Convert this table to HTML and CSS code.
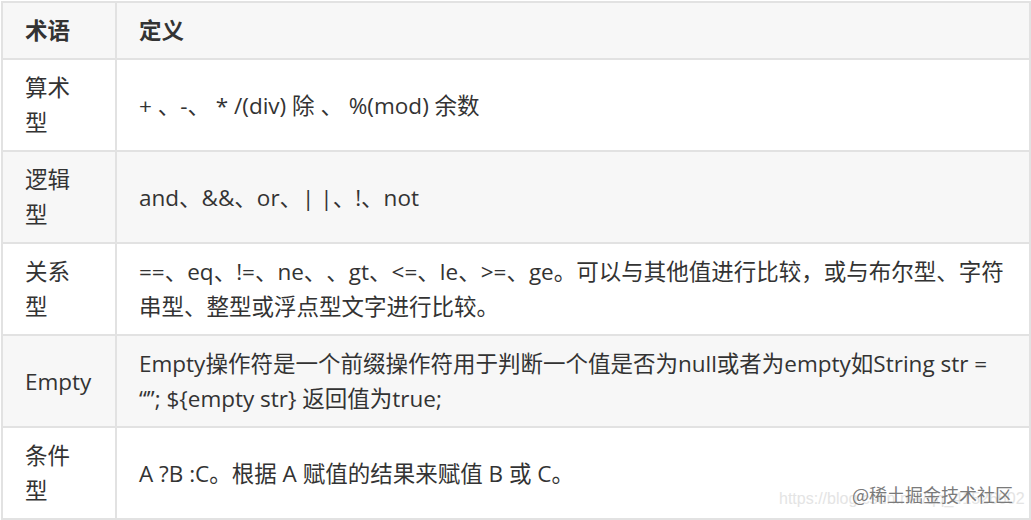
FILE: index.html
```html
<!DOCTYPE html>
<html lang="zh">
<head>
<meta charset="utf-8">
<link rel="stylesheet" href="styles.css">
</head>
<body>
<div class="page">
  <table class="terms">
    <colgroup>
      <col class="col-term">
      <col class="col-def">
    </colgroup>
    <thead>
      <tr><th>术语</th><th>定义</th></tr>
    </thead>
    <tbody>
      <tr><td>算术<br>型</td><td>+ 、-、 * /(div) 除 、 %(mod) 余数</td></tr>
      <tr class="alt"><td>逻辑<br>型</td><td>and、&amp;&amp;、or、| |、!、not</td></tr>
      <tr><td>关系<br>型</td><td>==、eq、!=、ne、、gt、&lt;=、le、&gt;=、ge。可以与其他值进行比较，或与布尔型、字符串型、整型或浮点型文字进行比较。</td></tr>
      <tr class="alt"><td>Empty</td><td>Empty操作符是一个前缀操作符用于判断一个值是否为null或者为empty如String str = “”; ${empty str} 返回值为true;</td></tr>
      <tr><td>条件<br>型</td><td>A ?B :C。根据 A 赋值的结果来赋值 B 或 C。</td></tr>
    </tbody>
  </table>
  <div class="wm-url">https://blog.csdn.net/qq_41526602</div>
  <div class="wm-brand">@稀土掘金技术社区</div>
</div>
</body>
</html>
```

FILE: styles.css
```css
html, body {
  margin: 0;
  padding: 0;
  background: #ffffff;
}

.page {
  position: relative;
  width: 1031px;
  height: 520px;
  padding: 1px 0 0 1px;
  box-sizing: border-box;
  overflow: hidden;
}

.terms {
  border-collapse: collapse;
  width: 1030px;
  table-layout: fixed;
  font-family: "Open Sans", "Noto Sans CJK SC", sans-serif;
  font-size: 22.5px;
  line-height: 35px;
  color: #333333;
  text-spacing-trim: space-all;
}

.col-term { width: 114px; }

.terms th,
.terms td {
  border: 2px solid #e2e2e2;
  padding: 10px 22px;
  text-align: left;
  vertical-align: middle;
}

.terms th {
  font-weight: 700;
  background: #f7f7f7;
}

.terms tr.alt td {
  background: #f7f7f7;
}

.wm-url {
  position: absolute;
  left: 779px;
  top: 490px;
  font-family: "Liberation Sans", sans-serif;
  font-size: 16px;
  color: #e4e4e4;
  white-space: nowrap;
}

.wm-brand {
  position: absolute;
  left: 852px;
  top: 481px;
  font-family: "Noto Sans CJK SC", sans-serif;
  font-size: 18px;
  color: #7a7a7a;
  white-space: nowrap;
}
```
